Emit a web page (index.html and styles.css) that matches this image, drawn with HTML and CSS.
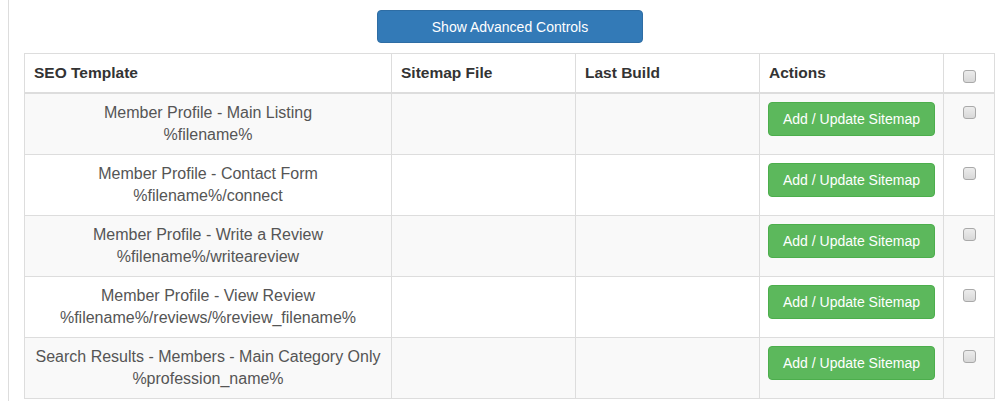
FILE: index.html
```html
<!DOCTYPE html>
<html>
<head>
<meta charset="utf-8">
<link rel="stylesheet" href="styles.css">
</head>
<body>
<div class="panel">
  <div class="toolbar">
    <button class="btn btn-blue">Show Advanced Controls</button>
  </div>
  <table class="grid">
    <colgroup>
      <col class="c1"><col class="c2"><col class="c3"><col class="c4"><col class="c5">
    </colgroup>
    <thead>
      <tr>
        <th>SEO Template</th>
        <th>Sitemap File</th>
        <th>Last Build</th>
        <th>Actions</th>
        <th class="chk-cell"><span class="chk chk-head"></span></th>
      </tr>
    </thead>
    <tbody>
      <tr class="odd">
        <td class="tpl">Member Profile - Main Listing<br>%filename%</td>
        <td></td><td></td>
        <td><button class="btn btn-green">Add / Update Sitemap</button></td>
        <td class="chk-cell"><span class="chk"></span></td>
      </tr>
      <tr>
        <td class="tpl">Member Profile - Contact Form<br>%filename%/connect</td>
        <td></td><td></td>
        <td><button class="btn btn-green">Add / Update Sitemap</button></td>
        <td class="chk-cell"><span class="chk"></span></td>
      </tr>
      <tr class="odd">
        <td class="tpl">Member Profile - Write a Review<br>%filename%/writeareview</td>
        <td></td><td></td>
        <td><button class="btn btn-green">Add / Update Sitemap</button></td>
        <td class="chk-cell"><span class="chk"></span></td>
      </tr>
      <tr>
        <td class="tpl">Member Profile - View Review<br>%filename%/reviews/%review_filename%</td>
        <td></td><td></td>
        <td><button class="btn btn-green">Add / Update Sitemap</button></td>
        <td class="chk-cell"><span class="chk"></span></td>
      </tr>
      <tr class="odd">
        <td class="tpl">Search Results - Members - Main Category Only<br>%profession_name%</td>
        <td></td><td></td>
        <td><button class="btn btn-green">Add / Update Sitemap</button></td>
        <td class="chk-cell"><span class="chk"></span></td>
      </tr>
    </tbody>
  </table>
</div>
</body>
</html>
```
FILE: styles.css
```css
html, body {
  margin: 0;
  padding: 0;
  background: #fff;
  font-family: "Liberation Sans", Arial, Helvetica, sans-serif;
  color: #333;
  overflow: hidden;
}
.panel {
  margin-left: 8px;
  border-left: 1px solid #ddd;
  padding: 10px 0 0 15px;
  width: 1000px;
  min-height: 401px;
  box-sizing: border-box;
}
.toolbar {
  width: 972px;
  text-align: center;
  margin-bottom: 10px;
  line-height: 0;
}
.btn {
  font-family: "Liberation Sans", Arial, Helvetica, sans-serif;
  font-size: 14px;
  color: #fff;
  border-radius: 4px;
  cursor: pointer;
  box-sizing: border-box;
}
.btn-blue {
  width: 266px;
  height: 33px;
  background: #337ab7;
  border: 1px solid #2e6da4;
  line-height: 19px;
  padding: 1px 0 0;
}
.btn-green {
  width: 167px;
  height: 34px;
  background: #5cb85c;
  border: 1px solid #4cae4c;
  padding: 0;
  line-height: 20px;
  display: block;
}
.grid {
  border-collapse: collapse;
  table-layout: fixed;
  width: 970px;
}
.c1 { width: 367px; }
.c2 { width: 184px; }
.c3 { width: 184px; }
.c4 { width: 184px; }
.c5 { width: 51px; }
.grid th, .grid td {
  border: 1px solid #ddd;
  padding: 8px;
  vertical-align: top;
  font-size: 16px;
  line-height: 22px;
}
.grid th {
  text-align: left;
  font-weight: bold;
  font-size: 15.5px;
  color: #333;
  border-bottom-width: 2px;
  vertical-align: bottom;
  padding-left: 9px;
}
.grid td {
  color: #555;
}
.grid td.tpl {
  text-align: center;
}
.grid tr.odd td {
  background: #f9f9f9;
}
.chk-cell {
  text-align: center;
}
.grid th.chk-cell {
  padding-left: 8px;
  text-align: center;
}
.chk {
  display: inline-block;
  width: 11px;
  height: 11px;
  border: 1px solid #a9a9a9;
  border-radius: 3px;
  background: linear-gradient(#ececec, #d8d8d8);
  vertical-align: top;
  margin-top: 4px;
}
.chk-head {
  margin-top: 8px;
  margin-bottom: 1px;
}
```
